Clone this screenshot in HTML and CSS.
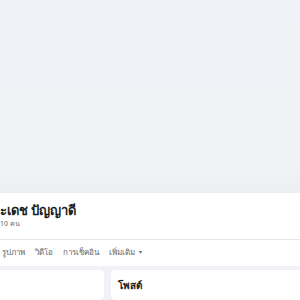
FILE: index.html
```html
<!DOCTYPE html>
<html lang="th">
<head>
<meta charset="utf-8">
<link rel="stylesheet" href="styles.css">
</head>
<body>
<div class="cover"></div>
<section class="header">
  <h1 class="name">ะเดช ปัญญาดี</h1>
  <div class="friends">10 คน</div>
  <nav class="tabs">
    <span class="tab">รูปภาพ</span>
    <span class="tab">วิดีโอ</span>
    <span class="tab">การเช็คอิน</span>
    <span class="tab">เพิ่มเติม<span class="caret">▾</span></span>
  </nav>
</section>
<main class="content">
  <div class="card left"></div>
  <div class="card right"><span class="card-title">โพสต์</span></div>
</main>
</body>
</html>
```

FILE: styles.css
```css
html, body {
  margin: 0;
  padding: 0;
}
body {
  background: #f0f2f5;
  font-family: "Noto Sans", "DejaVu Sans", sans-serif;
  width: 300px;
  height: 300px;
  overflow: hidden;
}
.cover {
  height: 193px;
  background: linear-gradient(#f0f2f7 0%, #f0f2f6 88%, #eceef1 100%);
}
.header {
  background: #ffffff;
  height: 73px;
  display: flex;
  flex-direction: column;
}
.name {
  margin: 8px 0 0 0;
  font-size: 13px;
  line-height: 18px;
  font-weight: 700;
  color: #1c1e21;
}
.friends {
  font-size: 7px;
  color: #65676b;
  line-height: 10px;
  margin-top: 0;
}
.tabs {
  border-top: 1px solid #e4e6eb;
  margin-top: 10px;
  display: flex;
  gap: 10px;
  padding-left: 2px;
  height: 24px;
  align-items: center;
}
.tab {
  font-size: 8px;
  color: #65676b;
  font-weight: 500;
  display: flex;
  align-items: center;
}
.caret {
  font-size: 6px;
  margin-left: 4px;
}
.content {
  display: flex;
  gap: 7px;
  padding-top: 4px;
}
.card {
  background: #ffffff;
  height: 30px;
  box-shadow: 0 1px 1px rgba(0,0,0,0.08);
}
.left {
  width: 104px;
  border-radius: 0 4px 4px 0;
}
.right {
  flex: 1;
  border-radius: 4px 0 0 4px;
  padding: 9px 0 0 7px;
  box-sizing: border-box;
}
.card-title {
  display: block;
  font-size: 10px;
  line-height: 12px;
  font-weight: 700;
  color: #1c1e21;
}
```
